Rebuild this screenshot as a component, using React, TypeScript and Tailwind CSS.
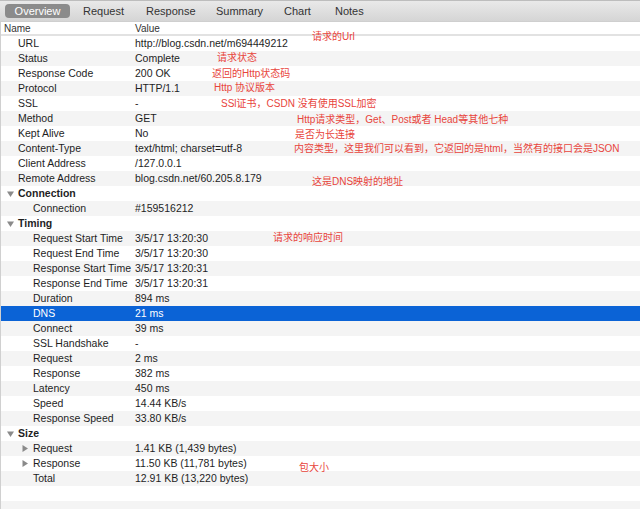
import React from 'react'

type Row = {
    name: string
    value?: string
    kind?: 'section' | 'item' | 'sub' | 'expand'
    selected?: boolean
}

const rows: Row[] = [
    { name: 'URL', value: 'http://blog.csdn.net/m694449212' },
    { name: 'Status', value: 'Complete' },
    { name: 'Response Code', value: '200 OK' },
    { name: 'Protocol', value: 'HTTP/1.1' },
    { name: 'SSL', value: '-' },
    { name: 'Method', value: 'GET' },
    { name: 'Kept Alive', value: 'No' },
    { name: 'Content-Type', value: 'text/html; charset=utf-8' },
    { name: 'Client Address', value: '/127.0.0.1' },
    { name: 'Remote Address', value: 'blog.csdn.net/60.205.8.179' },
    { name: 'Connection', kind: 'section' },
    { name: 'Connection', value: '#159516212', kind: 'sub' },
    { name: 'Timing', kind: 'section' },
    { name: 'Request Start Time', value: '3/5/17 13:20:30', kind: 'sub' },
    { name: 'Request End Time', value: '3/5/17 13:20:30', kind: 'sub' },
    { name: 'Response Start Time', value: '3/5/17 13:20:31', kind: 'sub' },
    { name: 'Response End Time', value: '3/5/17 13:20:31', kind: 'sub' },
    { name: 'Duration', value: '894 ms', kind: 'sub' },
    { name: 'DNS', value: '21 ms', kind: 'sub', selected: true },
    { name: 'Connect', value: '39 ms', kind: 'sub' },
    { name: 'SSL Handshake', value: '-', kind: 'sub' },
    { name: 'Request', value: '2 ms', kind: 'sub' },
    { name: 'Response', value: '382 ms', kind: 'sub' },
    { name: 'Latency', value: '450 ms', kind: 'sub' },
    { name: 'Speed', value: '14.44 KB/s', kind: 'sub' },
    { name: 'Response Speed', value: '33.80 KB/s', kind: 'sub' },
    { name: 'Size', kind: 'section' },
    { name: 'Request', value: '1.41 KB (1,439 bytes)', kind: 'expand' },
    { name: 'Response', value: '11.50 KB (11,781 bytes)', kind: 'expand' },
    { name: 'Total', value: '12.91 KB (13,220 bytes)', kind: 'sub' },
]

// red notes scribbled over the screenshot: [text, left, top]
const notes: [string, number, number][] = [
    ['请求的Url', 312, 31],
    ['请求状态', 217, 52],
    ['返回的Http状态码', 212, 68],
    ['Http 协议版本', 214, 82],
    ['SSl证书，CSDN 没有使用SSL加密', 221, 98],
    ['Http请求类型，Get、Post或者 Head等其他七种', 297, 114],
    ['是否为长连接', 295, 129],
    ['内容类型，这里我们可以看到，它返回的是html，当然有的接口会是JSON', 294, 143],
    ['这是DNS映射的地址', 312, 176],
    ['请求的响应时间', 273, 232],
    ['包大小', 299, 462],
]

const tabs: [string, string][] = [
    ['Request', 'w-[63px]'],
    ['Response', 'w-[70px]'],
    ['Summary', 'w-[68px]'],
    ['Chart', 'w-[51px]'],
    ['Notes', 'w-[40px]'],
]

const Down = () => (
    <svg width="7" height="6" viewBox="0 0 7 6" className="shrink-0">
        <path d="M0 0.5 L7 0.5 L3.5 6 Z" fill="#8a8a8a" />
    </svg>
)

const Right = () => (
    <svg width="6" height="7" viewBox="0 0 6 7" className="shrink-0">
        <path d="M0.5 0 L6 3.5 L0.5 7 Z" fill="#8a8a8a" />
    </svg>
)

const App: React.FC = () => {
    return (
        <div className="relative w-[640px] h-[509px] overflow-hidden bg-white text-[10.5px] text-[#1e1e1e] font-[family-name:'Liberation_Sans',Arial,sans-serif]">
            <div className="h-[22px] flex items-center border-t border-[#bdbdbd] bg-gradient-to-b from-[#e9e9e9] to-[#d5d5d5] border-b border-b-[#cfcfcf]">
                <div className="flex items-center pl-[5px] text-[11px] text-[#333]">
                    <div className="w-[65px] h-[14px] rounded-[4px] bg-[#8b8b8b] text-white flex items-center justify-center">
                        Overview
                    </div>
                    <div className="w-[13px]" />
                    {tabs.map(([t, w]) => (
                        <div key={t} className={w}>{t}</div>
                    ))}
                </div>
            </div>
            <div className="border-l border-[#d0d0d0]">
                <div className="h-[14px] flex items-center border-b-2 border-[#e2e2e2] text-[10px] text-[#333]">
                    <div className="w-[134px] pl-[3px]">Name</div>
                    <div>Value</div>
                </div>
                {rows.map((r, i) => {
                    const bg = r.selected ? 'bg-[#0b63d6] text-white' : i % 2 ? 'bg-[#f4f4f4]' : 'bg-white'
                    return (
                        <div key={i} className={`h-[15px] flex items-center ${bg}`}>
                            <div className="w-[134px] flex items-center">
                                {r.kind === 'section' && (
                                    <div className="flex items-center gap-[4px] pl-[6px] font-bold">
                                        <Down />
                                        <span>{r.name}</span>
                                    </div>
                                )}
                                {r.kind === 'expand' && (
                                    <div className="flex items-center gap-[5px] pl-[21px]">
                                        <Right />
                                        <span>{r.name}</span>
                                    </div>
                                )}
                                {r.kind === 'sub' && <span className="pl-[32px] whitespace-nowrap">{r.name}</span>}
                                {!r.kind && <span className="pl-[17px]">{r.name}</span>}
                            </div>
                            <div className="whitespace-nowrap">{r.value}</div>
                        </div>
                    )
                })}
                <div className="h-[15px] bg-white" />
                <div className="h-[15px] bg-[#f4f4f4]" />
            </div>
            {notes.map(([text, left, top]) => (
                <div
                    key={text}
                    className="absolute whitespace-nowrap text-[10px] leading-[12px] text-[#e8443c] font-[family-name:'Liberation_Sans','Noto_Sans_CJK_SC',sans-serif]"
                    style={{ left, top }}
                >
                    {text}
                </div>
            ))}
        </div>
    )
}

export default App
